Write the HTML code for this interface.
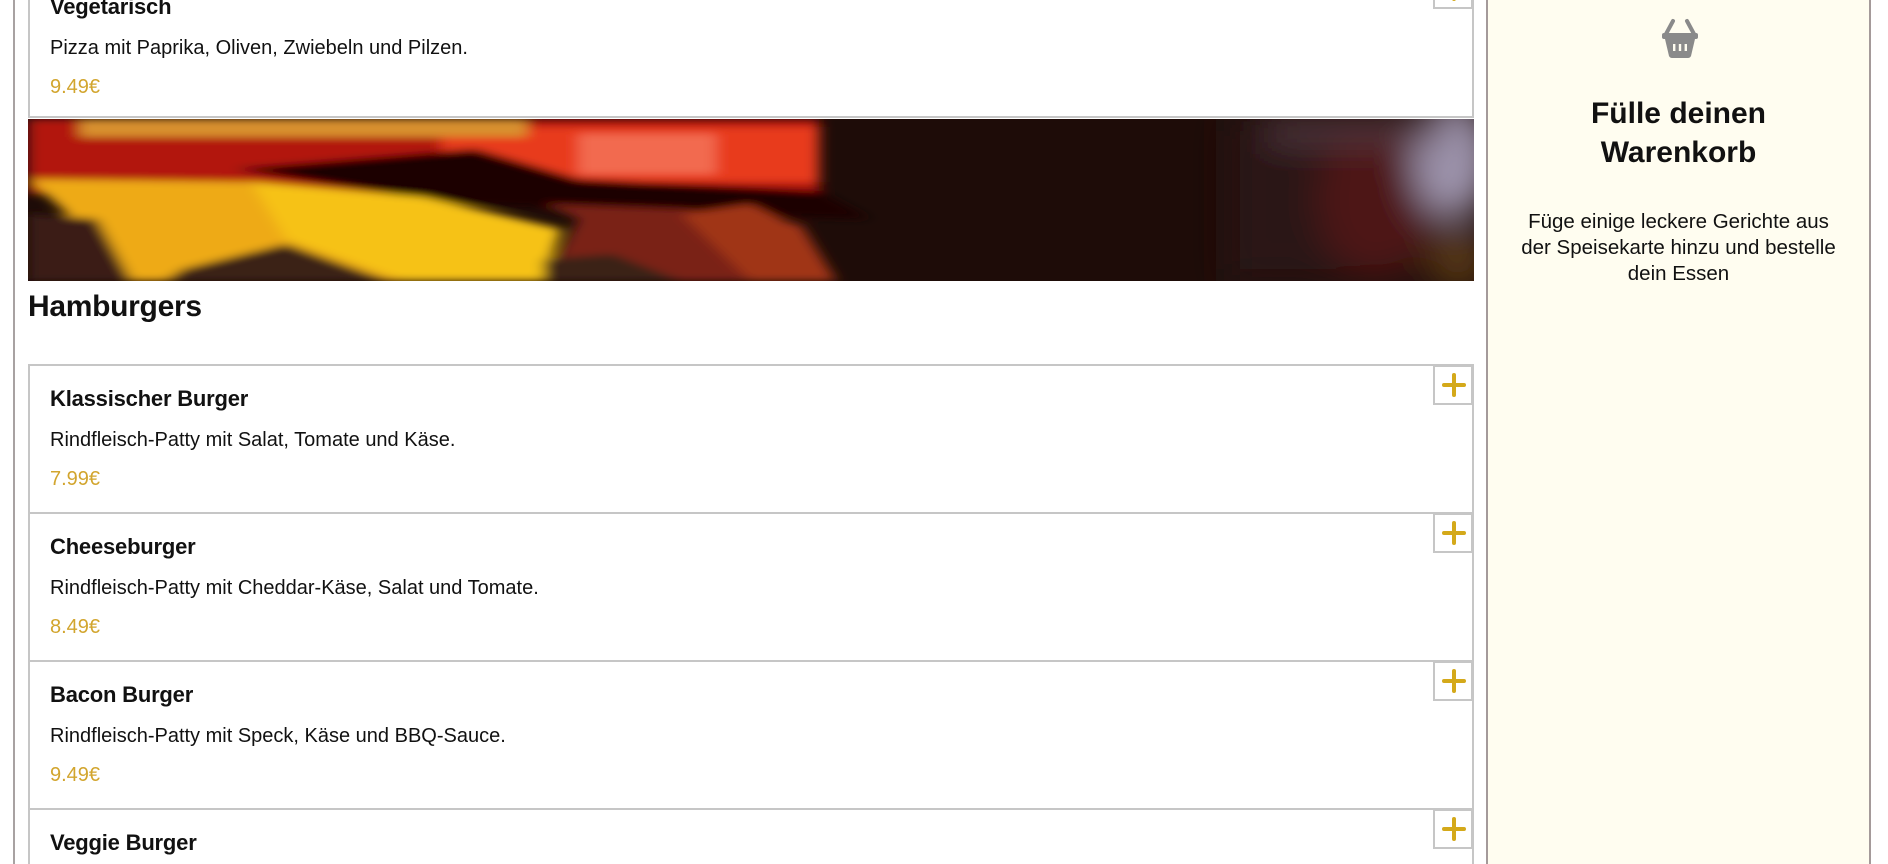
<!DOCTYPE html>
<html><head><meta charset="utf-8"><style>
*{margin:0;padding:0;box-sizing:border-box}
html{width:1888px;height:864px;overflow:hidden}
body{width:1888px;height:864px;overflow:hidden;background:#fff;font-family:"Liberation Sans",Arial,sans-serif;color:#111;position:relative}
.vline{position:absolute;left:13px;top:0;width:2px;height:864px;background:#a8a2a2}
.card{position:absolute;left:28px;width:1446px;height:150px;border:2px solid #c6c6c6;background:#fff}
.card h3{position:absolute;left:20px;top:20px;font-size:22px;font-weight:700;letter-spacing:-0.2px}
.card p{position:absolute;left:20px;top:63px;font-size:20px}
.card .pr{position:absolute;left:20px;top:102px;font-size:20px;color:#d2a52e}
.card.v h3{top:24px}.card.v p{top:67px}.card.v .pr{top:106px}
.plus{position:absolute;right:-1px;top:-1px;width:40px;height:40px;border:2px solid #c6c6c6;background:#fff}
.plus:before,.plus:after{content:"";position:absolute;background:#d4a91a;border-radius:2px}
.plus:before{left:7px;top:16px;width:24px;height:4px}
.plus:after{left:17px;top:6px;width:4px;height:24px}
.side{position:absolute;left:1486px;top:0;width:385px;height:864px;background:#fffdf0;border-left:2px solid #a49a9a;border-right:2px solid #a49a9a}
.side h2{position:absolute;left:0;width:381px;top:94px;text-align:center;font-size:30px;line-height:39px;font-weight:700}
.side p{position:absolute;left:0;width:381px;top:209px;text-align:center;font-size:20.5px;line-height:26px}
h1{position:absolute;left:28px;top:290px;font-size:30px;font-weight:700;letter-spacing:-0.3px}
</style></head><body>
<div class="vline"></div>

<div class="card v" style="top:-32px"><h3>Vegetarisch</h3><p>Pizza mit Paprika, Oliven, Zwiebeln und Pilzen.</p><div class="pr">9.49€</div><div class="plus"></div></div>

<svg style="position:absolute;left:28px;top:119px" width="1446" height="162" viewBox="0 0 1446 162">
<defs><filter id="b" x="-10%" y="-20%" width="120%" height="140%"><feGaussianBlur stdDeviation="4"/></filter>
<filter id="b2" x="-20%" y="-50%" width="140%" height="200%"><feGaussianBlur stdDeviation="18"/></filter></defs>
<rect width="1446" height="162" fill="#1e0c08"/>
<g filter="url(#b2)">
<rect x="1200" y="0" width="120" height="162" fill="#2a1614"/>
<ellipse cx="1350" cy="80" rx="60" ry="80" fill="#4e1812"/>
<ellipse cx="1425" cy="40" rx="40" ry="60" fill="#9c93ab"/>
<ellipse cx="1430" cy="140" rx="30" ry="30" fill="#5a3a18"/>
<rect x="1240" y="0" width="180" height="20" fill="#5a4048"/>
</g>
<g filter="url(#b)" transform="scale(1.72,1)">
<rect x="0" y="0" width="460" height="75" fill="#b2180e"/>
<rect x="240" y="8" width="220" height="55" fill="#e83a1e"/>
<rect x="320" y="15" width="80" height="40" fill="#f26a50"/>
<rect x="30" y="0" width="260" height="18" fill="#d8902e"/>
<polygon points="120,50 260,30 320,60 460,72 490,100 380,95 250,85" fill="#1a0604"/>
<polygon points="300,85 380,90 450,105 470,162 300,162 320,100" fill="#7a2412"/>
<polygon points="380,95 420,85 450,110 470,162 420,162" fill="#a03418"/>
<polygon points="0,60 130,63 230,78 310,110 300,162 200,162 150,132 100,162 50,162 20,90" fill="#eeaa14"/>
<polygon points="130,63 230,78 310,110 300,162 220,162 150,120" fill="#f6c218"/>
<polygon points="0,95 40,100 60,162 0,162" fill="#3a1e18"/>
<polygon points="90,150 150,125 210,162 80,162" fill="#3a2018"/>
<polygon points="300,140 340,135 380,162 300,162" fill="#3a2018"/>
</g>
</svg>

<h1>Hamburgers</h1>

<div class="card" style="top:364px"><h3>Klassischer Burger</h3><p>Rindfleisch-Patty mit Salat, Tomate und Käse.</p><div class="pr">7.99€</div><div class="plus"></div></div>
<div class="card" style="top:512px"><h3>Cheeseburger</h3><p>Rindfleisch-Patty mit Cheddar-Käse, Salat und Tomate.</p><div class="pr">8.49€</div><div class="plus"></div></div>
<div class="card" style="top:660px"><h3>Bacon Burger</h3><p>Rindfleisch-Patty mit Speck, Käse und BBQ-Sauce.</p><div class="pr">9.49€</div><div class="plus"></div></div>
<div class="card" style="top:808px;height:80px;border-bottom:none"><h3>Veggie Burger</h3><div class="plus"></div></div>

<div class="side">
<svg style="position:absolute;left:174px;top:18px" width="36" height="42" viewBox="0 0 36 42">
<path d="M11 3 L4 16 M25 3 L32 16" stroke="#8a8a8a" stroke-width="4" stroke-linecap="round" fill="none"/>
<rect x="0" y="15" width="36" height="6" rx="2" fill="#8a8a8a"/>
<path d="M3 21 H33 L29 38 Q28 40 26 40 H10 Q8 40 7 38 Z" fill="#8a8a8a"/>
<rect x="11" y="26" width="2.4" height="7" fill="#fffdf0"/>
<rect x="16.8" y="26" width="2.4" height="7" fill="#fffdf0"/>
<rect x="22.6" y="26" width="2.4" height="7" fill="#fffdf0"/>
</svg>
<h2>Fülle deinen<br>Warenkorb</h2>
<p>Füge einige leckere Gerichte aus<br>der Speisekarte hinzu und bestelle<br>dein Essen</p>
</div>
</body></html>
